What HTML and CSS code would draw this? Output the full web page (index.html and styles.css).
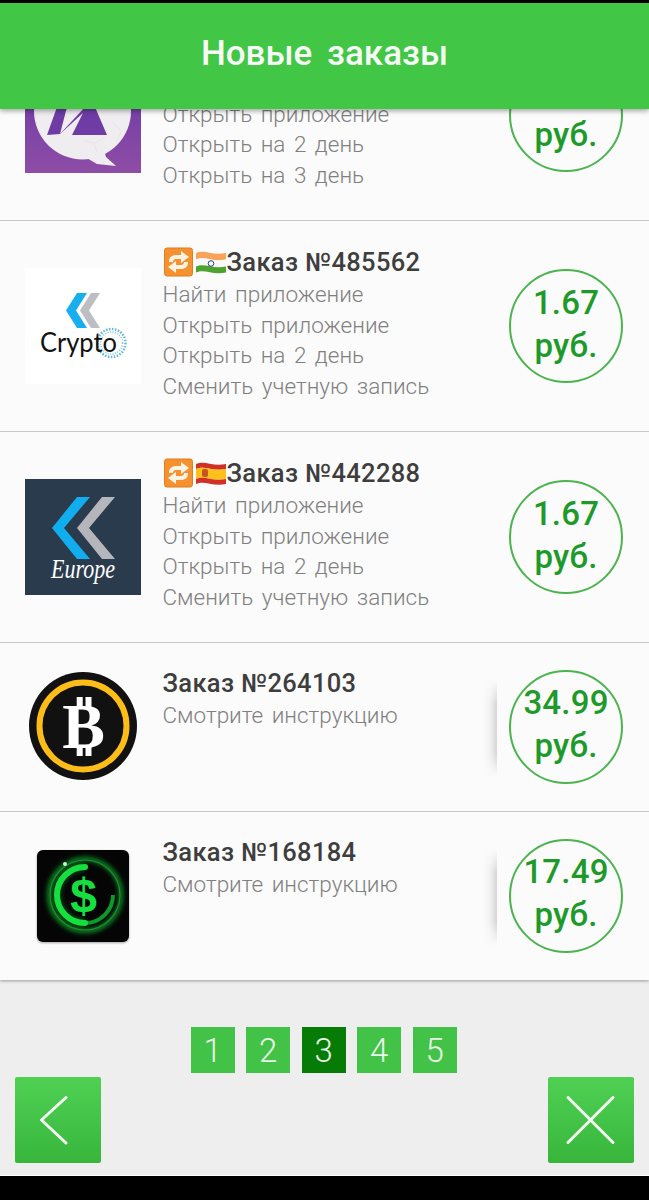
FILE: index.html
```html
<!DOCTYPE html>
<html lang="ru">
<head>
<meta charset="utf-8">
<title>Новые заказы</title>
<link rel="stylesheet" href="styles.css">
</head>
<body>
<div class="screen">
  <header class="topbar">Новые заказы</header>
  <main class="list">
    <section class="row row-tall row-clipped">
      <div class="thumb">
        <svg class="icon" viewBox="0 0 116 116"><defs><linearGradient id="pg" x1="0" y1="0" x2="0" y2="1"><stop offset="0" stop-color="#6435a6"/><stop offset="1" stop-color="#8e4da6"/></linearGradient></defs><rect width="116" height="116" fill="url(#pg)"/><circle cx="57.500" cy="54" r="48.500" fill="#efedf0"/><path d="M60 100L78 90 81 100 91 109 72 107z" fill="#efedf0"/><path d="M22 78L32 50H70L82 78H47L58 56 35 77z" fill="#6f3ca6"/><path d="M35 77L42 50H60z" fill="#efedf0"/><path d="M86 64l10 10-5 12M72 96l-3-10 12-6M60 84l9 2" fill="none" stroke="#e6e3e8" stroke-width=".8"/></svg>
      </div>
      <div class="info">
        <p class="line">Открыть приложение</p>
        <p class="line">Открыть на 2 день</p>
        <p class="line">Открыть на 3 день</p>
      </div>
      <div class="price"><span>руб.</span></div>
    </section>

    <section class="row row-tall">
      <div class="thumb">
        <svg class="icon" viewBox="0 0 116 116"><rect width="116" height="116" fill="#fff"/><path d="M52 25H62L51 42.500 62 60H52L41 42.500z" fill="#19aeee"/><path d="M66 25H75L64 42.500 75 60H66L55 42.500z" fill="#bcbec3"/><circle cx="86.500" cy="75" r="14" fill="none" stroke="#5fb8d4" stroke-width="2.500" stroke-dasharray="1.500 1.500"/><circle cx="86.500" cy="75" r="11" fill="none" stroke="#7ac6dc" stroke-width="1.500" stroke-dasharray="1 1.500"/><text x="53.500" y="84" class="crypto" text-anchor="middle" textLength="77" lengthAdjust="spacingAndGlyphs">Crypto</text></svg>
      </div>
      <div class="info">
        <h2 class="title"><svg class="emoji" viewBox="0 0 32 32"><rect x="1.500" y="1" width="28" height="28" rx="2.500" fill="#f5922f" stroke="#e07d1c"/><path d="M6 15c0-5 3-7 7-7h5V4l8 6-8 6v-4h-5c-2 0-3 1-3 3zM25 15c0 5-3 7-7 7h-5v4l-8-6 8-6v4h5c2 0 3-1 3-3z" fill="#fff3e4"/></svg><svg class="emoji" viewBox="0 0 32 32"><path d="M1 6c9-4 16 3 30 0v6.500c-14 3-21-4-30 0z" fill="#f7a35c"/><path d="M1 12.500c9-4 16 3 30 0v7c-14 3-21-4-30 0z" fill="#f8f8f6"/><path d="M1 19.500c9-4 16 3 30 0v6c-14 3-21-4-30 0z" fill="#4da32f"/><circle cx="16" cy="16.500" r="2.800" fill="none" stroke="#26408f" stroke-width="1"/></svg>Заказ №485562</h2>
        <p class="line">Найти приложение</p>
        <p class="line">Открыть приложение</p>
        <p class="line">Открыть на 2 день</p>
        <p class="line">Сменить учетную запись</p>
      </div>
      <div class="price"><span>1.67</span><span>руб.</span></div>
    </section>

    <section class="row row-tall">
      <div class="thumb">
        <svg class="icon" viewBox="0 0 116 116"><rect width="116" height="116" fill="#2b3b4e"/><path d="M52 18H65L39 49 65 80H52L27 49z" fill="#10aeef"/><path d="M77 18H90L64 49 90 80H77L52 49z" fill="#b4b6bb"/><text x="58" y="99" class="europe" text-anchor="middle" textLength="64" lengthAdjust="spacingAndGlyphs">Europe</text></svg>
      </div>
      <div class="info">
        <h2 class="title"><svg class="emoji" viewBox="0 0 32 32"><rect x="1.500" y="1" width="28" height="28" rx="2.500" fill="#f5922f" stroke="#e07d1c"/><path d="M6 15c0-5 3-7 7-7h5V4l8 6-8 6v-4h-5c-2 0-3 1-3 3zM25 15c0 5-3 7-7 7h-5v4l-8-6 8-6v4h5c2 0 3-1 3-3z" fill="#fff3e4"/></svg><svg class="emoji" viewBox="0 0 32 32"><path d="M1 6c9-4 16 3 30 0v5c-14 3-21-4-30 0z" fill="#d22f27"/><path d="M1 11c9-4 16 3 30 0v10c-14 3-21-4-30 0z" fill="#fcc21b"/><path d="M1 21c9-4 16 3 30 0v5c-14 3-21-4-30 0z" fill="#d22f27"/><rect x="7" y="11" width="6" height="8" rx="2" fill="#c8551f"/></svg>Заказ №442288</h2>
        <p class="line">Найти приложение</p>
        <p class="line">Открыть приложение</p>
        <p class="line">Открыть на 2 день</p>
        <p class="line">Сменить учетную запись</p>
      </div>
      <div class="price"><span>1.67</span><span>руб.</span></div>
    </section>

    <section class="row row-short">
      <div class="thumb">
        <svg class="icon" viewBox="0 0 116 116"><circle cx="58" cy="58" r="54" fill="#111"/><circle cx="58" cy="58" r="43.500" fill="none" stroke="#fdbd18" stroke-width="6"/><text x="58.500" y="80" class="bitcoin" text-anchor="middle">B</text><path d="M51.700 29h6v10h-6zM60.500 29h6v10h-6zM51.700 78h6v10h-6zM60.500 78h6v10h-6z" fill="#fff"/></svg>
      </div>
      <div class="info">
        <h2 class="title">Заказ №264103</h2>
        <p class="line">Смотрите инструкцию</p>
      </div>
      <div class="price price-shadow"><span>34.99</span><span>руб.</span></div>
    </section>

    <section class="row row-short">
      <div class="thumb">
        <svg class="icon" viewBox="0 0 116 116"><defs><filter id="gl" x="-30%" y="-30%" width="160%" height="160%"><feGaussianBlur stdDeviation="2"/></filter><filter id="sh" x="-10%" y="-10%" width="120%" height="120%"><feGaussianBlur stdDeviation="1"/></filter></defs><rect x="12" y="14" width="92" height="92" rx="6" fill="#000" opacity=".35" filter="url(#sh)"/><rect x="12" y="13" width="92" height="92" rx="6" fill="#050505"/><circle cx="60" cy="58" r="36" fill="none" stroke="#0b7a22" stroke-width="5" filter="url(#gl)"/><circle cx="60" cy="58" r="35" fill="none" stroke="#1c8f30" stroke-width="1.200"/><path d="M60 30A28 28 0 0 0 60 86" fill="none" stroke="#16d93c" stroke-width="9" filter="url(#gl)" opacity=".3"/><path d="M60 86A28 28 0 0 0 88 58" fill="none" stroke="#0d9a2a" stroke-width="4"/><path d="M60 30A28 28 0 0 0 60 86" fill="none" stroke="#16e040" stroke-width="6" stroke-linecap="round"/><circle cx="40" cy="27" r="2" fill="#c9f5d2"/><text x="58.500" y="74.500" class="dollar" text-anchor="middle">$</text></svg>
      </div>
      <div class="info">
        <h2 class="title">Заказ №168184</h2>
        <p class="line">Смотрите инструкцию</p>
      </div>
      <div class="price price-shadow"><span>17.49</span><span>руб.</span></div>
    </section>
  </main>
  <footer class="footer">
    <nav class="pager">
      <a class="page">1</a>
      <a class="page">2</a>
      <a class="page current">3</a>
      <a class="page">4</a>
      <a class="page">5</a>
    </nav>
    <div class="actions">
      <button class="btn" aria-label="Назад"><svg viewBox="0 0 86 86"><path d="M51 20.500L26.500 43 51 66" fill="none" stroke="#f4fbf2" stroke-width="3" stroke-linecap="round" stroke-linejoin="round"/></svg></button>
      <button class="btn" aria-label="Закрыть"><svg viewBox="0 0 86 86"><path d="M20 20.500L65 65.500M65 20.500L20 65.500" fill="none" stroke="#f4fbf2" stroke-width="3" stroke-linecap="round"/></svg></button>
    </div>
  </footer>
  <div class="navbar"></div>
</div>
</body>
</html>
```
FILE: styles.css
```css
* { box-sizing: border-box; }
html, body { margin: 0; padding: 0; }
body { background: #000; font-family: Roboto, "Liberation Sans", sans-serif; }
.screen {
  width: 649px;
  height: 1200px;
  display: flex;
  flex-direction: column;
  overflow: hidden;
  border-top: 3px solid #000;
  background: #000;
}
.topbar {
  position: relative;
  z-index: 2;
  flex: 0 0 106px;
  padding-bottom: 5px;
  background: #41c646;
  color: #f6fcf5;
  font-size: 35px;
  font-weight: 500;
  word-spacing: 6px;
  display: flex;
  align-items: center;
  justify-content: center;
  box-shadow: 0 2px 5px rgba(0,0,0,.35);
}
.list {
  margin-top: -99px;
  background: #fbfbfb;
  flex: 0 0 auto;
  box-shadow: 0 1px 3px rgba(0,0,0,.35);
  position: relative;
  z-index: 1;
}
.row {
  display: flex;
  align-items: flex-start;
  border-bottom: 1px solid #c9c7c4;
}
.row:last-child { border-bottom: 0; height: 168px; }
.row-tall { height: 211px; }
.row-short { height: 169px; }
.thumb {
  flex: 0 0 116px;
  height: 116px;
  margin: 47px 0 0 25px;
}
.row-short .thumb { margin-top: 25px; }
.icon { display: block; width: 116px; height: 116px; }
.info {
  flex: 1;
  margin: 25px 0 0 21.500px;
  min-width: 0;
}
.row-short .info { margin-top: 24px; }
.row-clipped .info { margin-top: 88.600px; }
.title {
  margin: 0;
  height: 33px;
  font-size: 25.500px;
  line-height: 33px;
  font-weight: 500;
  letter-spacing: .35px;
  color: #3e3e3e;
  display: flex;
  align-items: center;
  white-space: nowrap;
}
.emoji { width: 32px; height: 32px; flex: none; }
.line {
  margin: 0;
  font-size: 22.500px;
  line-height: 30.600px;
  font-weight: 300;
  color: #808080;
  word-spacing: 3px;
  white-space: nowrap;
}
.price {
  position: relative;
  flex: 0 0 114px;
  width: 114px;
  height: 114px;
  margin: 48px 26px 0 0;
  padding-bottom: 5px;
  border: 2px solid #4bb44f;
  border-radius: 50%;
  color: #1e9a2a;
  font-size: 33px;
  font-weight: 500;
  line-height: 43px;
  letter-spacing: .2px;
  display: flex;
  flex-direction: column;
  align-items: center;
  justify-content: center;
  white-space: nowrap;
}
.row-clipped .price { padding-top: 43px; }
.row-short .price { margin-top: 27px; padding-bottom: 7px; }
.price-shadow::before {
  content: "";
  position: absolute;
  left: -28px;
  top: 8px;
  width: 14px;
  height: 97px;
  background: linear-gradient(to left, rgba(0,0,0,.15), rgba(0,0,0,.04) 50%, rgba(0,0,0,0));
  -webkit-mask-image: linear-gradient(to bottom, transparent, #000 25%, #000 75%, transparent);
  mask-image: linear-gradient(to bottom, transparent, #000 25%, #000 75%, transparent);
}
.crypto { font-family: Lato, "Open Sans", sans-serif; font-weight: 400; font-size: 27px; fill: #111; }
.europe { font-family: "Liberation Serif", serif; font-style: italic; font-size: 28px; fill: #fff; }
.bitcoin { font-family: "Liberation Serif", serif; font-weight: 700; font-size: 64px; fill: #fff; }
.dollar { font-family: "Liberation Sans", sans-serif; font-weight: 700; font-size: 48px; fill: #16e040; }
.footer {
  flex: 1;
  background: #eeeeee;
  display: flex;
  flex-direction: column;
  border-bottom: 1px solid #fff;
}
.pager {
  display: flex;
  justify-content: center;
  gap: 11.500px;
  margin-top: 47px;
  padding-right: 1.500px;
}
.page {
  width: 44px;
  height: 46px;
  background: #43c248;
  color: #eaf7e8;
  font-size: 33px;
  font-weight: 300;
  display: flex;
  align-items: center;
  justify-content: center;
}
.page.current { background: #067c06; }
.actions {
  display: flex;
  justify-content: space-between;
  padding: 0 15px;
  margin-top: 4px;
}
.btn {
  width: 86px;
  height: 86px;
  padding: 0;
  border: 0;
  border-radius: 2px;
  background: linear-gradient(#4fd053, #37b63b);
}
.btn svg { display: block; width: 86px; height: 86px; }
.navbar { flex: 0 0 24px; background: #000; }
```
